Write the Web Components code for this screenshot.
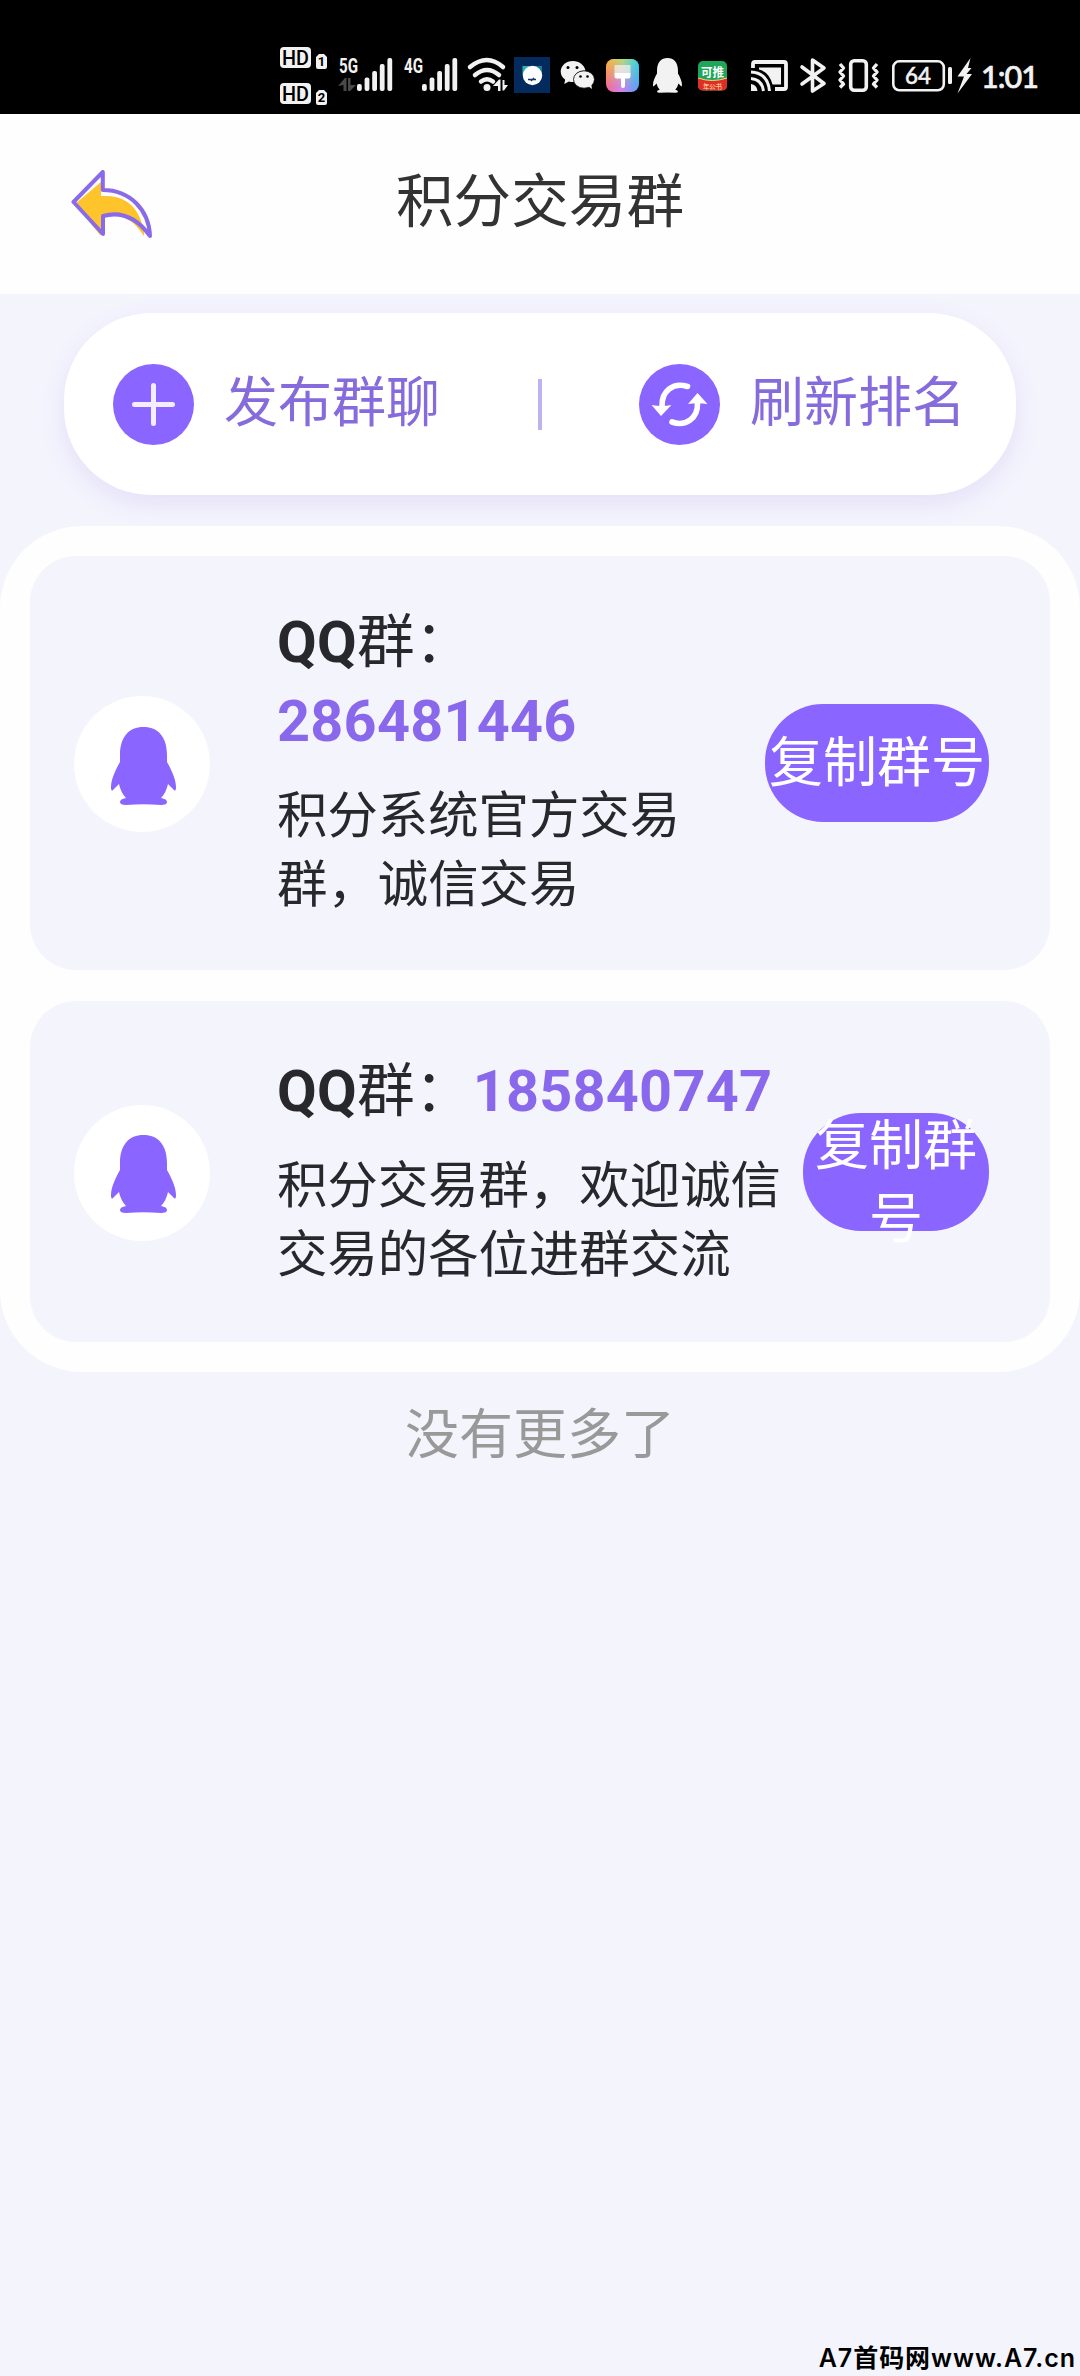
<!DOCTYPE html>
<html lang="zh-CN">
<head>
<meta charset="utf-8">
<title>积分交易群</title>
<style>
html,body{margin:0;background:#f4f4fd}
body{font-family:Roboto,"Noto Sans CJK SC",sans-serif;width:1080px;height:2376px;overflow:hidden}
</style>
</head>
<body>
<group-page></group-page>
<script>
const define = (name, html, setup) => customElements.define(name, class extends HTMLElement {
  constructor() {
    super();
    this.attachShadow({ mode: 'open' }).innerHTML = html;
  }
  connectedCallback() { if (setup) setup(this, this.shadowRoot); }
});

/* Each status glyph spans the full bar height; x and w give its horizontal slice. */
const slice = (x, w, body) => `<svg width="${w}" height="114" viewBox="${x} 0 ${w} 114">${body}</svg>`;
const bars = x => [84, 77.5, 71, 64, 58].map((y, i) => `<rect x="${x + i * 7.6}" y="${y}" width="4.8" height="${91 - y}" rx="2"/>`).join('');
const penguin = 'M9 28C9 10 18 0 32.5 0S56 10 56 28V35C60 42 65 52 65 60Q65 66 62 62L57 57Q55 66 50 71Q56 72 56 75Q56 78 50 78Q32.5 76.6 15 78Q9 78 9 75Q9 72 15 71Q10 66 8 57L3 62Q0 66 0 60C0 52 5 42 9 35Z';

define('status-bar', `<style>
:host{display:flex;height:114px;background:#000;padding-left:276px;fill:#f2f2f2}
svg{display:block;flex:none} text{font-family:Roboto,sans-serif}
.o{fill:none;stroke:#f2f2f2}
.clock{width:104px;flex:none;box-sizing:border-box;padding:59px 0 0 5px;color:#f2f2f2;font:500 30.500px/34px Lato,sans-serif;-webkit-text-stroke:.7px #f2f2f2;letter-spacing:-.9px;white-space:nowrap}
</style>` +
slice(276, 56, `<rect x="280" y="47" width="31" height="21" rx="4"/><rect x="280" y="83" width="31" height="21" rx="4"/>
<g fill="#000" font-size="20" font-weight="500"><text x="282" y="65" textLength="27" lengthAdjust="spacingAndGlyphs">HD</text><text x="282" y="101" textLength="27" lengthAdjust="spacingAndGlyphs">HD</text></g>
<path d="M319 54h5l3 3v10q0 2-2 2h-7q-2 0-2-2V57zM319 90h5l3 3v10q0 2-2 2h-7q-2 0-2-2V93z"/>
<g fill="#000" font-size="13" font-weight="700" text-anchor="middle"><text x="321.5" y="66.4">1</text><text x="321.5" y="102.4">2</text></g>`) +
slice(332, 66, `<text x="339" y="72.500" font-size="20" font-weight="700" textLength="19" lengthAdjust="spacingAndGlyphs">5G</text>
<path fill="#494949" d="M338 86l7-8h1.500v13h-3v-6zM348 78h2.500v7h5.500l-6 6H348z"/>${bars(357)}`) +
slice(398, 64, `<text x="404" y="72.500" font-size="20" font-weight="700" textLength="19" lengthAdjust="spacingAndGlyphs">4G</text>${bars(422)}`) +
slice(462, 48, `<g class="o" stroke-width="4.500" stroke-linecap="round"><path d="M470 67Q487 53 503 67M475 75Q487 65 499 75M481 81.500Q487 77 493 81.500"/></g><circle cx="487" cy="87.500" r="3.500"/><path d="M493 86l6-6.500h1.500V91h-2.500v-5zM502.500 80h2v5h3.500l-4 5.500h-1.500z"/>`) +
slice(510, 46, `<rect x="514" y="57" width="36" height="36" fill="#032b5e"/><path fill="#2db5ad" d="M522.500 66h7l-4 9h-3z"/><path fill="#167f91" d="M542 66h-7l4 9h3z"/><circle cx="532.5" cy="75.500" r="9.700" fill="#fff"/><path d="M528 79.500h8m-5 1.500l3-3" stroke="#123761" stroke-width="1.400" fill="none"/>`) +
slice(556, 44, `<path d="M573 61c-7 0-12.300 4.700-12.300 10.600 0 3.400 1.800 6.200 4.500 8.200l-1 4.200 4.800-2.500q2 .6 5 .5c-1-9 5.500-11.300 11.500-11.200C584.500 65 579 61 573 61z"/><ellipse cx="584" cy="79.500" rx="10.500" ry="8.700" stroke="#000" stroke-width=".8"/><path d="M588 86l4 3-1-6z"/><g fill="#000"><circle cx="568" cy="67.500" r="1.500"/><circle cx="577" cy="67.500" r="1.500"/><circle cx="580.500" cy="76.500" r="1.300"/><circle cx="587.500" cy="76.500" r="1.300"/></g>`) +
slice(600, 46, `<defs><linearGradient id="h"><stop stop-color="#f76b8d"/><stop offset=".45" stop-color="#d083e8"/><stop offset="1" stop-color="#4ea8f8"/></linearGradient><linearGradient id="t"><stop stop-color="#ffb52e"/><stop offset=".5" stop-color="#b3dc7a"/><stop offset="1" stop-color="#2cd6e8"/></linearGradient><linearGradient id="f" x2="0" y2="1"><stop stop-color="#fff"/><stop offset="1" stop-color="#fff" stop-opacity="0"/></linearGradient><mask id="m"><rect x="606" y="59" width="33" height="28" fill="url(#f)"/></mask></defs>
<rect x="606" y="59" width="33" height="33" rx="8" fill="url(#h)"/><rect x="606" y="59" width="33" height="33" rx="8" fill="url(#t)" mask="url(#m)"/>
<path d="M614.500 65h16v8h-16z" fill="#fff" opacity=".6"/><path d="M614.500 73h16v3.500q0 2-2 2h-3.500V86q0 2-2 2t-2-2v-7.500h-4.500q-2 0-2-2z" fill="#fff"/>`) +
slice(646, 44, `<g transform="translate(653 58) scale(.446)"><path d="${penguin}"/></g>`) +
slice(690, 56, `<rect x="698" y="61" width="29" height="29.500" rx="5" fill="#20a65b"/><path d="M698 78q14 5 29 0v7.500q0 5-5 5h-19q-5 0-5-5z" fill="#df2f25"/><path d="M698 78q14 5 29 0" fill="none" stroke="#f4d67d"/><text x="701" y="77" font-size="12" font-weight="700" fill="#fff" style="font-family:'Noto Sans CJK SC',sans-serif" textLength="23" lengthAdjust="spacingAndGlyphs">可推</text><text x="703" y="88.500" font-size="6.500" fill="#ffe9b8" style="font-family:'Noto Sans CJK SC',sans-serif" textLength="19">年公书</text>`) +
slice(746, 50, `<path class="o" stroke-width="3.800" d="M753 68V64q0-2 2-2h29q2 0 2 2v23q0 2-2 2H775"/><path d="M759 67.500h22v17h-8.500Q769 72 759 69.500z"/><path class="o" stroke-width="3" d="M751 72q17 1 18.500 19M751 78.500q11 1 12.500 12.500"/><path d="M751 84q6 1 6.500 7H751z"/>`) +
slice(796, 36, `<path class="o" stroke-width="3.600" stroke-linejoin="round" stroke-linecap="round" d="M802 67l22 16.500-11.500 7.500V60l11.500 8-22 16"/>`) +
slice(832, 52, `<rect class="o" x="850.700" y="60.700" width="15.600" height="29.600" rx="3.500" stroke-width="3.600"/><path class="o" stroke-width="3.400" stroke-linejoin="round" d="M840 64l3.500 4-3.500 4 3.500 4-3.500 4 3.500 4-3.500 3.500M877 64l-3.500 4 3.500 4-3.500 4 3.500 4-3.500 4 3.500 3.500"/>`) +
slice(884, 92, `<rect class="o" x="893.300" y="61.300" width="50.500" height="29" rx="6" stroke-width="2.600"/><rect x="948" y="67" width="4" height="17" rx="1.500"/><text x="905" y="84" font-size="23.500" style="font-family:Lato,sans-serif" font-weight="500" stroke="#f2f2f2" stroke-width=".5" textLength="26" lengthAdjust="spacingAndGlyphs">64</text><path d="M970.500 58l-13 18.500h6.500l-6.500 17L972 74h-5.500l5-6h-3.500z"/>`) + `<div class="clock">1:01</div>`);

define('title-bar', `<style>
:host{display:grid;grid-template-columns:1fr auto 1fr;align-items:center;height:180px;background:#fefefe;color:#333;font-size:57.600px;line-height:80px}
svg{margin-left:71px;display:block} h1{margin:0;font:inherit;padding-bottom:2px}
</style><svg width="82" height="68" viewBox="0 0 82 68"><path fill="#ffc42c" d="M4 34L30 12V26C50 25 62 32 69 48C71 54 74 61 73 66C64 52 52 42 33 47V64L29 65z"/><path fill="none" stroke="#886aeb" stroke-width="4" stroke-linejoin="round" d="M2.500 32L31.800 2V20C59 20 78 40 79 66C66 48 50 41 32 46V64z"/></svg><h1><slot></slot></h1>`);

define('round-icon', `<style>:host{display:block;width:81px;height:81px}svg{display:none}
:host([name=plus]) .plus,:host([name=refresh]) .refresh{display:block}</style>
<svg class="plus" width="81" height="81"><circle cx="40.500" cy="40.500" r="40.500" fill="#8a65ff"/><path d="M21.500 40.500h38M40.500 21.500v38" stroke="#f2edff" stroke-width="5" stroke-linecap="round"/></svg>
<svg class="refresh" width="81" height="81"><circle cx="40.500" cy="40.500" r="40.500" fill="#8a65ff"/><g fill="none" stroke="#fff" stroke-width="5.600" stroke-linecap="round"><path d="M48.500 22.500C34 18 22.500 27 23 42M33 58C47 63 59 54 58.500 39"/></g><path fill="#fff" d="M12.500 41Q23 43 32.500 41L22 52zM68.500 40Q58 38.500 49 40L58.500 29z"/></svg>`);

define('action-bar', `<style>
:host{display:flex;align-items:center;box-sizing:border-box;width:952px;height:182px;margin:19px auto 0;border-radius:87px;background:#fff;box-shadow:0 9px 26px rgba(110,75,200,.11);color:#866bdd;font-size:54px;line-height:76px;padding:0 49px}
.a{display:flex;align-items:center;gap:30px;white-space:nowrap}
i{width:4px;height:51px;background:#bfb2f0;margin:0 97px 0 98px}
</style><div class="a"><round-icon name="plus"></round-icon><span>发布群聊</span></div><i></i><div class="a"><round-icon name="refresh"></round-icon><span>刷新排名</span></div>`);

define('copy-button', `<style>
:host{display:flex;align-items:center;justify-content:center;flex:none;box-sizing:border-box;height:118px;border-radius:58px;background:#8a65ff;color:#fff;font-size:54px;line-height:73px;text-align:center;padding-top:var(--drop,0)}
</style><span><slot></slot></span>`);

define('group-card', `<style>
:host{display:flex;align-items:center;box-sizing:border-box;background:#f4f4fd;border-radius:46px;padding:0 61px 0 44px;color:#28282c}
.avatar{display:flex;align-items:center;justify-content:center;width:136px;height:136px;border-radius:50%;background:#fff;flex:none;margin-top:2px}
.avatar svg{margin:3px 0 0 3px;fill:#8a65ff}
.text{width:var(--text);margin-left:67px;flex:none;padding-bottom:var(--shift)}
.title{font-size:57.600px;line-height:79px;letter-spacing:.25px}
.title b{font-weight:700} .title .num{color:#8a68ec;display:inline-block}
.desc{font-size:50.400px;line-height:69px;margin-top:20px}
copy-button{margin-left:auto;width:var(--button)}
</style><div class="avatar"><svg width="65" height="78" viewBox="0 0 65 78"><path d="${penguin}"/></svg></div>
<div class="text"><div class="title"><b>QQ</b>群：<b class="num"></b></div><div class="desc"><slot></slot></div></div><copy-button>复制群号</copy-button>`,
(el, root) => root.querySelector('.num').textContent = el.getAttribute('number'));

define('group-list', `<style>
:host{display:flex;flex-direction:column;gap:31px;margin-top:31px;padding:30px;border-radius:82px;background:#fefefe}
</style><slot></slot>`);

define('group-page', `<style>
:host{display:flex;flex-direction:column;height:2376px;background:#f4f4fd}
.one{height:414px;--text:440px;--button:224px;--shift:4px}
.two{height:341px;--text:512px;--button:186px;--shift:2px;--drop:23px}
.end{text-align:center;color:#999;font-size:54px;line-height:76px;margin-top:26px}
footer{display:flex;align-items:baseline;margin:auto 4px 0 auto;color:#000;font-family:Inter,"Noto Sans CJK SC",sans-serif;font-weight:600;font-size:25px;letter-spacing:.95px;line-height:36px;white-space:nowrap}
</style><status-bar></status-bar><title-bar>积分交易群</title-bar><action-bar></action-bar>
<group-list><group-card class="one" number="286481446">积分系统官方交易群，诚信交易</group-card><group-card class="two" number="185840747">积分交易群，欢迎诚信交易的各位进群交流</group-card></group-list>
<div class="end">没有更多了</div>
<footer><span>A7首码网www.A7.cn</span></footer>`);
</script>
</body>
</html>
